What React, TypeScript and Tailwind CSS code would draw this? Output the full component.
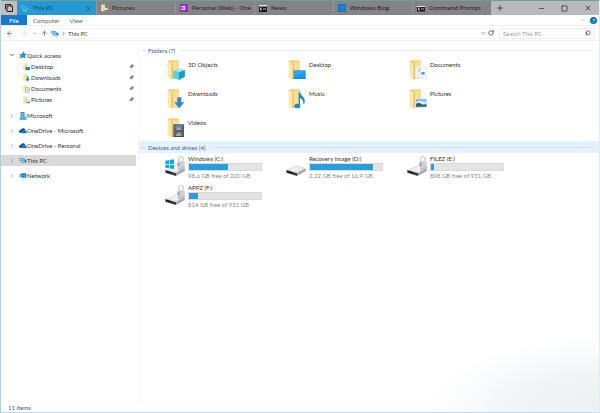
import type { ReactNode } from 'react';
import { ChevronDown, ChevronRight, ArrowLeft, ArrowRight, ArrowUp, RotateCw, Search, Pin, Plus, Minus, Square, X } from 'lucide-react';

type Overlay = 'cube' | 'desktop' | 'doc' | 'down' | 'music' | 'picture' | 'video';

interface Drive {
  name: string;
  free: string;
  used: number;
  locked?: boolean;
  system?: boolean;
}

const folders: { name: string; overlay: Overlay }[] = [
  { name: '3D Objects', overlay: 'cube' },
  { name: 'Desktop', overlay: 'desktop' },
  { name: 'Documents', overlay: 'doc' },
  { name: 'Downloads', overlay: 'down' },
  { name: 'Music', overlay: 'music' },
  { name: 'Pictures', overlay: 'picture' },
  { name: 'Videos', overlay: 'video' },
];

const drives: Drive[] = [
  { name: 'Windows (C:)', free: '98.6 GB free of 220 GB', used: 54, locked: true, system: true },
  { name: 'Recovery Image (D:)', free: '2.22 GB free of 16.9 GB', used: 87 },
  { name: 'FILEZ (E:)', free: '898 GB free of 931 GB', used: 4, locked: true },
  { name: 'APPZ (F:)', free: '814 GB free of 931 GB', used: 13, locked: true },
];

function PcIcon({ light = false }: { light?: boolean }) {
  return (
    <svg viewBox="0 0 16 14" className="h-[7px] w-2 shrink-0">
      <path d="M1 1l10 2v7L1 8z" fill={light ? '#5fc3ef' : '#3ba3dc'} />
      <path d="M2 2.4l8 1.6v4.7L2 7.1z" fill={light ? '#2f9fd8' : '#74c6ee'} />
      <path d="M11 5l4 .8v5.7l-4-.8z" fill={light ? '#45afe2' : '#2b7fb4'} />
      <path d="M3 10l9 2v1.4L3 11.6z" fill={light ? '#9cdcf7' : '#6d9db8'} />
    </svg>
  );
}

function FolderMini({ overlay }: { overlay: Overlay }) {
  return (
    <svg viewBox="0 0 14 16" className="h-2 w-[7px] shrink-0">
      <path d="M1 1h7v13H1z" fill="#f3d88a" />
      <path d="M1 1l4 2v12l-4-1z" fill="#fbe7a8" />
      {overlay === 'desktop' && <path d="M5 8h9v6H5z" fill="#168bc9" />}
      {overlay === 'down' && <path d="M8 5h3v5h2.500l-4 5-4-5H8z" fill="#2584c9" />}
      {overlay === 'doc' && <path d="M5 5h8v10H5zM7 8h4M7 10h4M7 12h4" fill="#e9eef2" stroke="#92a1ad" />}
      {overlay === 'picture' && (
        <>
          <path d="M5 8h9v6H5z" fill="#e8f2fa" stroke="#a4b7c3" />
          <path d="M6 14l3-3 2 1 3-1v3z" fill="#56879b" />
        </>
      )}
    </svg>
  );
}

function FolderIcon({ overlay }: { overlay: Overlay }) {
  return (
    <svg viewBox="0 0 54 60" className="h-5 w-[18px] shrink-0">
      <path d="M2 4l5-3h25l4 3v52H9z" fill="#efcf79" />
      <path d="M16 5h20v50H16z" fill="#f8df94" />
      <path d="M2 4l12 7v48L2 52z" fill="#fce8a9" />
      <path d="M14 11l3-2v46l-3 4z" fill="#e2bc5e" />
      {overlay === 'cube' && (
        <>
          <path d="M20 32l18-6 15 5v19l-17 9-16-6z" fill="#25aecb" />
          <path d="M20 32l18-6 15 5-16 6z" fill="#a4edf6" />
          <path d="M20 32l17 5-1 22-16-6z" fill="#58d0e3" />
          <path d="M37 37l16-6v19l-17 9z" fill="#1c9dbd" />
        </>
      )}
      {overlay === 'desktop' && (
        <>
          <path d="M17 31h36v26H17z" fill="#178ce0" />
          <path d="M19 33h32v19H19z" fill="#2ea5f4" />
          <path d="M19 52l32-14v14z" fill="#1d97ea" />
        </>
      )}
      {overlay === 'doc' && (
        <>
          <path d="M18 20h19l7 7v28H18z" fill="#edf2f6" stroke="#c1ccd4" />
          <path d="M28 16h16l8 8v32H28z" fill="#fafdff" stroke="#b8c6d0" />
          <path d="M35 22l-5 13M33 40h5" stroke="#4c91ba" strokeWidth="2" />
          <path d="M38 36h9v8h-9z" fill="#5f98b9" />
          <path d="M32 49h15M32 52h12" stroke="#b8cad5" />
        </>
      )}
      {overlay === 'down' && <path d="M31 25h12v15h9L37 58 22 40h9z" fill="#2f83cf" />}
      {overlay === 'music' && (
        <>
          <ellipse cx="28" cy="51" rx="9" ry="7" fill="#118dd0" />
          <path d="M32 10h4c2 11 17 14 14 31-1 3-3 5-4 6 2-11-4-17-10-19v23h-4z" fill="#118dd0" />
        </>
      )}
      {overlay === 'picture' && (
        <>
          <path d="M19 29h35v26H19z" fill="#f7fafc" stroke="#b8c4cc" />
          <path d="M21 31h31v22H21z" fill="#76afe8" />
          <path d="M21 39c9-5 18-5 31 1v6H21z" fill="#dceaf5" />
          <path d="M21 44l9-3 13 7 9-3v8H21z" fill="#315a63" />
          <path d="M21 50h31v3H21z" fill="#487eaa" />
        </>
      )}
      {overlay === 'video' && (
        <>
          <path d="M19 19h32v38H19z" fill="#454b52" />
          <path d="M25 22h20v14H25z" fill="#648bc0" />
          <path d="M25 38h20v16H25z" fill="#4d6894" />
          <path d="M28 33l6-5 8 6v2H28zM27 50l8-8 8 7v5H27z" fill="#b6ab70" />
          <path d="M22 22v32M48 22v32" stroke="#aeb6bd" strokeWidth="2" strokeDasharray="3 3" />
        </>
      )}
    </svg>
  );
}

function DriveIcon({ locked, system }: { locked?: boolean; system?: boolean }) {
  return (
    <svg viewBox="0 0 66 66" className="h-[22px] w-[22px] shrink-0">
      {locked && (
        <>
          <path d="M45 24V11c0-9 12-9 12 0v7" fill="none" stroke="#b4b9bd" strokeWidth="3" />
          <path d="M40 22l14-4 8 4v26l-15 5-7-4z" fill="#c5cacd" />
          <path d="M40 22l8 4v27l-8-4z" fill="#a7adb1" />
          <path d="M49 30l12-4M49 37l12-4M49 44l12-4" stroke="#eef1f2" strokeWidth="2" />
        </>
      )}
      <path d="M4 45l32-14 26 9-26 15z" fill="#dcdddd" />
      <path d="M4 45l32 10v8L4 53z" fill="#34383a" />
      <path d="M36 55l26-15v8L36 63z" fill="#a4a6a7" />
      <path d="M8 48l12 4v3L8 51z" fill="#0c0f10" />
      <path d="M12 44l24-10 18 6-19 10z" fill="#eff0f0" />
      {locked && <path d="M42 35l6 3 14-6v8l-15 7-5-3z" fill="#bcc2c6" />}
      {system && (
        <path d="M4 17l11-2v12H4zM17 15l13-2v14H17zM4 29h11v11L4 38zM17 29h13v13l-13-2z" fill="#14a8df" />
      )}
    </svg>
  );
}

function OneNoteIcon() {
  return (
    <svg viewBox="0 0 16 16" className="size-2 shrink-0">
      <path d="M0 0h16v16H0z" fill="#8c35b7" />
      <path d="M3 4h9v8H3z" fill="#f0dff8" />
      <path d="M5 10V6l3 4V6M11 4v8M12 6h2M12 9h2" fill="none" stroke="#8c35b7" strokeWidth="1.500" />
    </svg>
  );
}

function ConsoleIcon({ tall = false }: { tall?: boolean }) {
  return (
    <svg viewBox="0 0 16 14" className="h-[7px] w-2 shrink-0">
      <path d={tall ? 'M0 0h16v14H0z' : 'M0 2h16v11H0z'} fill="#171717" />
      <path d={tall ? 'M0 0h16v3H0z' : 'M0 2h16v2H0z'} fill="#e5e5e5" />
      <path d="M6 6H3v4h3M9 6v1M9 9v1M11 6l3 4" fill="none" stroke="#eee" strokeWidth="1.500" />
    </svg>
  );
}

function WindowsTile() {
  return (
    <svg viewBox="0 0 16 16" className="size-2 shrink-0">
      <path d="M0 0h16v16H0z" fill="#0878cf" />
      <path d="M3 4l4-.6V8H3zM8 3.300l5-.7V8H8zM3 9h4v4.300L3 12.700zM8 9h5v5l-5-.7z" fill="#2287d6" />
    </svg>
  );
}

function QuickAccessIcon() {
  return (
    <svg viewBox="0 0 16 16" className="size-2 shrink-0">
      <path d="M9 0l2 5 5 .5-4 4 1 6-5-3-5 3 1-5-4-4 6-.5z" fill="#2b8fd0" />
      <path d="M0 14l5-5" stroke="#69b3df" strokeWidth="2" />
    </svg>
  );
}

function OfficeIcon() {
  return (
    <svg viewBox="0 0 16 16" className="size-2 shrink-0">
      <path d="M3 0h8v15H3z" fill="#368cc8" />
      <path d="M5 3h4M5 6h4M5 9h4" stroke="#b9e0f6" strokeWidth="1.500" />
      <path d="M8 9h7v7H1v-4h7z" fill="#65aedc" />
    </svg>
  );
}

function CloudIcon() {
  return (
    <svg viewBox="0 0 18 14" className="h-[7px] w-2 shrink-0">
      <path d="M1 12c-2-4 0-6 3-6 1-5 8-6 10-1l-6 3-2 4z" fill="#0a4f9c" />
      <path d="M7 13c-2-3 0-5 2-5 1-4 6-3 6 0 4 0 3 5 1 5z" fill="#1673c5" />
    </svg>
  );
}

function NetworkIcon() {
  return (
    <svg viewBox="0 0 16 14" className="h-[7px] w-2 shrink-0">
      <path d="M1 4l8-2v8l-8 1z" fill="#55acdf" />
      <circle cx="10" cy="7" r="5" fill="#1b77bd" />
      <path d="M8 3l4 3-2 5M6 7l5 1" fill="none" stroke="#8bcff2" />
    </svg>
  );
}

const tabs: { title: string; icon: ReactNode }[] = [
  { title: 'This PC', icon: <PcIcon light /> },
  { title: 'Pictures', icon: <FolderMini overlay="picture" /> },
  { title: 'Personal (Web) - One', icon: <OneNoteIcon /> },
  { title: 'News', icon: <ConsoleIcon tall /> },
  { title: 'Windows Blog', icon: <WindowsTile /> },
  { title: 'Command Prompt', icon: <ConsoleIcon /> },
];

const pinned: { name: string; overlay: Overlay }[] = [
  { name: 'Desktop', overlay: 'desktop' },
  { name: 'Downloads', overlay: 'down' },
  { name: 'Documents', overlay: 'doc' },
  { name: 'Pictures', overlay: 'picture' },
];

const places: { name: string; icon: ReactNode; selected?: boolean }[] = [
  { name: 'Microsoft', icon: <OfficeIcon /> },
  { name: 'OneDrive - Microsoft', icon: <CloudIcon /> },
  { name: 'OneDrive - Personal', icon: <CloudIcon /> },
  { name: 'This PC', icon: <PcIcon />, selected: true },
  { name: 'Network', icon: <NetworkIcon /> },
];

function TitleBar() {
  return (
    <header className="flex h-[15px] border-t border-[#6f9c9f] bg-[#b9b9b9] font-['Open_Sans',sans-serif] text-[6px] text-[#111]">
      <button aria-label="Tab sets" className="grid w-4 shrink-0 place-items-center bg-[#c4bfbc]">
        <svg viewBox="0 0 16 16" className="size-2" fill="none" stroke="#222" strokeWidth="2">
          <path d="M1 11V1h11v3M4 4h11v11H4z" />
        </svg>
      </button>
      <nav className="flex min-w-0">
        {tabs.map((t, i) => (
          <button
            key={t.title}
            className={`flex w-[79px] min-w-0 items-center gap-1 pl-1 text-left whitespace-nowrap ${
              i === 0 ? 'bg-[#2599d4] text-[#12344a]' : 'border-l border-[#969696] bg-[#848484]'
            }`}
          >
            {t.icon}
            <span className="flex-1">{t.title}</span>
            {i === 0 && <X className="mr-1 size-[7px] text-[#12344a]" />}
          </button>
        ))}
      </nav>
      <button aria-label="New tab" className="grid w-[18px] shrink-0 place-items-center">
        <Plus className="size-2" />
      </button>
      <div className="ml-auto flex">
        <button aria-label="Minimize" className="grid w-[23px] place-items-center"><Minus className="size-[7px]" /></button>
        <button aria-label="Maximize" className="grid w-[23px] place-items-center"><Square className="size-[7px]" /></button>
        <button aria-label="Close" className="grid w-[23px] place-items-center"><X className="size-2" /></button>
      </div>
    </header>
  );
}

function Ribbon() {
  return (
    <div className="flex h-[11px] items-stretch border-b border-[#eeeeee] text-[6px] text-[#666]">
      <button className="w-[26px] bg-[#1979ca] text-white">File</button>
      <button className="ml-1.5">Computer</button>
      <button className="ml-2.5">View</button>
      <div className="ml-auto flex items-center gap-1 pr-0.5">
        <ChevronDown className="size-[6px] text-[#999]" />
        <button aria-label="Help" className="grid size-[7px] place-items-center rounded-full bg-[#0f6fb8] text-[6px] leading-[7px] text-white">?</button>
      </div>
    </div>
  );
}

function AddressBar() {
  return (
    <div className="flex h-[15px] items-center border-b border-[#f0f0f0] pl-[5px] text-[6px] text-[#444]">
      <button aria-label="Back"><ArrowLeft className="size-[7px]" /></button>
      <button aria-label="Forward" className="ml-2"><ArrowRight className="size-[7px] text-[#d0d0d0]" /></button>
      <button aria-label="Recent" className="ml-1"><ChevronDown className="size-[5px]" /></button>
      <button aria-label="Up" className="ml-1"><ArrowUp className="size-[7px]" /></button>
      <div className="ml-0.5 flex h-[11px] flex-1 items-center gap-0.5 border border-[#f3f3f3]">
        <PcIcon />
        <ChevronRight className="size-[5px]" strokeWidth={3} />
        <span className="flex-1">This PC</span>
        <button aria-label="Previous locations"><ChevronDown className="size-[6px]" /></button>
        <button aria-label="Refresh"><RotateCw className="size-[6px]" strokeWidth={3} /></button>
      </div>
      <label className="mr-1 ml-1 flex h-[11px] w-24 items-center border border-[#ececec] px-[3px]">
        <input aria-label="Search" placeholder="Search This PC" className="min-w-0 flex-1 outline-none placeholder:text-[#999]" />
        <Search className="size-[6px] -scale-x-100" strokeWidth={3} />
      </label>
    </div>
  );
}

function Sidebar() {
  return (
    <aside className="w-[138px] shrink-0 border-r border-[#f4f4f4] pt-2 pr-0.5 text-[6px]">
      <button className="flex h-3 w-full items-center pl-2">
        <ChevronDown className="mr-1 size-[6px]" strokeWidth={3} />
        <QuickAccessIcon />
        Quick access
      </button>
      <ul className="mb-[5px]">
        {pinned.map((p) => (
          <li key={p.name}>
            <button className="flex h-[11px] w-full items-center gap-px pr-0.5 pl-[22px] text-left">
              <FolderMini overlay={p.overlay} />
              <span className="flex-1">{p.name}</span>
              <Pin className="size-[5px] rotate-45 fill-current text-[#777]" />
            </button>
          </li>
        ))}
      </ul>
      {places.map((p) => (
        <button
          key={p.name}
          className={`mt-1 flex h-[11px] w-full items-center pl-2 ${p.selected ? 'bg-[#d9d9d9]' : ''}`}
        >
          <ChevronRight className="mr-1 size-[6px] text-[#666]" />
          {p.icon}
          {p.name}
        </button>
      ))}
    </aside>
  );
}

function SectionHeader({ title, active = false }: { title: string; active?: boolean }) {
  return (
    <h2 className={`flex h-3 items-center gap-0.5 pr-2 pl-0.5 text-[6px] text-[#3b5a94] ${active ? 'bg-[#e6f2fb]' : ''}`}>
      <ChevronDown className="size-[5px] text-[#7d93b5]" />
      {title}
      <span className={`ml-1 h-px flex-1 ${active ? 'bg-[#cfe0f2]' : 'bg-[#e6ebf3]'}`} />
    </h2>
  );
}

function DriveItem({ drive }: { drive: Drive }) {
  return (
    <li className="flex h-[29px] gap-0.5">
      <DriveIcon locked={drive.locked} system={drive.system} />
      <div className="w-[74px] text-[6px] leading-[8px] whitespace-nowrap">
        <p>{drive.name}</p>
        <div className="h-2 border border-[#d9d9d9] bg-[#e4e4e4]">
          <div className="h-full bg-[#26a0da]" style={{ width: `${drive.used}%` }} />
        </div>
        <p className="pt-px text-[#888]">{drive.free}</p>
      </div>
    </li>
  );
}

export default function App() {
  return (
    <div className="flex min-h-screen flex-col border-r border-b border-l border-r-[#d9f0f8] border-b-[#b5e2f0] border-l-[#b4cfdf] bg-white bg-[radial-gradient(ellipse_170px_75px_at_bottom_right,#ebf0f3_0%,#f1f5f7_50%,transparent_100%)] font-[Lato,sans-serif] text-[#333]">
      <TitleBar />
      <Ribbon />
      <AddressBar />
      <div className="flex flex-1">
        <Sidebar />
        <main className="min-w-0 flex-1 pt-[3px]">
          <SectionHeader title="Folders (7)" />
          <ul className="grid grid-cols-[repeat(auto-fill,121px)] gap-y-[9px] pt-1 pb-[3px] pl-7">
            {folders.map((f) => (
              <li key={f.name} className="flex h-5 gap-[3px] text-[6px] leading-[10px]">
                <FolderIcon overlay={f.overlay} />
                {f.name}
              </li>
            ))}
          </ul>
          <SectionHeader title="Devices and drives (4)" active />
          <ul className="grid grid-cols-[repeat(auto-fill,121px)] pt-0.5 pl-[25px]">
            {drives.map((d) => (
              <DriveItem key={d.name} drive={d} />
            ))}
          </ul>
        </main>
      </div>
      <footer className="px-[7px] text-[6px] leading-[8px] text-[#555]">11 items</footer>
    </div>
  );
}
